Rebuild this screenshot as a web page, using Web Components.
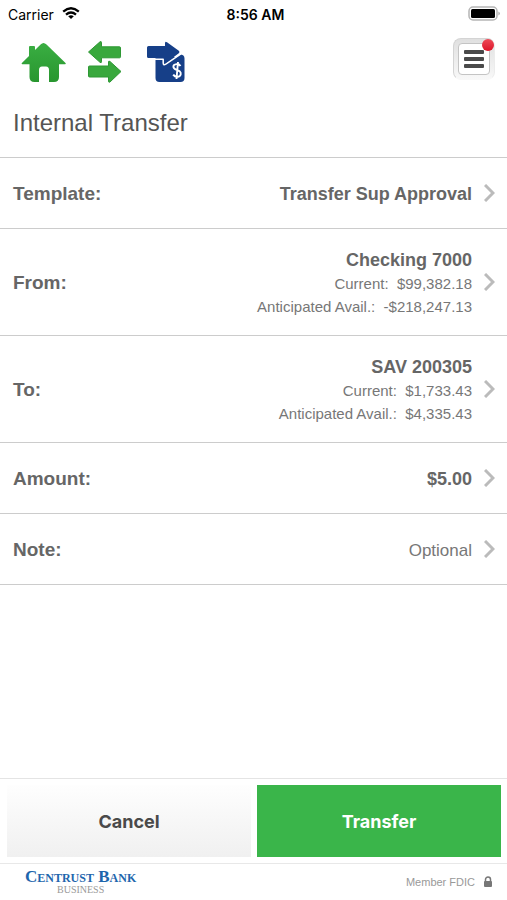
<!DOCTYPE html>
<html lang="en">
<head>
<meta charset="utf-8">
<meta name="viewport" content="width=device-width, initial-scale=1">
<title>Internal Transfer</title>
<style>
  html, body {
    height: 100%;
  }
  body {
    margin: 0;
    background: #fff;
    color: #666;
    font-family: "Liberation Sans", Helvetica, Arial, sans-serif;
  }
</style>
</head>
<body>
<transfer-page></transfer-page>

<script>
const define = (name, html) => {
  const template = document.createElement("template");
  template.innerHTML = html;

  window.customElements.define(
    name,
    class extends HTMLElement {
      constructor() {
        super();
        this.attachShadow({ mode: "open" });
        this.shadowRoot.appendChild(template.content.cloneNode(true));
      }
    }
  );
};

define("status-bar", `
    <style>
    :host {
      display: grid;
      grid-template-columns: 1fr auto 1fr;
      align-items: center;
      height: 28px;
      padding: 0 6px 0 8px;
      color: #000;
      font-family: Inter, sans-serif;
      font-size: 14px;
    }
    .carrier {
      display: flex;
      align-items: center;
      gap: 8px;
    }
    time {
      padding-left: 2px;
      font-weight: 600;
    }
    .battery {
      justify-self: end;
    }
    svg {
      display: block;
    }
    </style>

    <div class="carrier">
      <span>Carrier</span>
      <svg width="18" height="14" viewBox="0 0 18 14" fill="none" stroke="#000" stroke-width="2.3">
        <path d="M1.2 4.6Q9-2.2 16.8 4.6"/>
        <path d="M4 7.7Q9 3.4 14 7.7"/>
        <path d="M9 12L6.2 9.3Q9 7.2 11.8 9.3Z" fill="#000" stroke="none"/>
      </svg>
    </div>
    <time>8:56 AM</time>
    <svg class="battery" width="33" height="16" viewBox="0 0 33 16">
      <rect x="1" y="1" width="28" height="13" rx="4" fill="#fff" stroke="#b5b5b5" stroke-width="1.5"/>
      <rect x="3" y="3" width="24" height="9" rx="1.5" fill="#000"/>
      <path d="M30.5 5.5Q33 7.5 30.5 9.5Z" fill="#999"/>
    </svg>
`);

define("nav-bar", `
    <style>
    :host {
      display: flex;
      align-items: center;
      justify-content: space-between;
      height: 68px;
      padding: 0 12px 0 20px;
    }
    nav {
      display: flex;
      gap: 14px;
    }
    a, svg {
      display: block;
    }
    .menu {
      position: relative;
      box-sizing: border-box;
      width: 42px;
      height: 42px;
      margin-bottom: 6px;
      padding: 4px;
      border: 1px solid #d4d4d4;
      border-bottom-color: #f8f8f8;
      border-right-color: #ececec;
      border-radius: 8px;
      background: linear-gradient(#e0e0e0, #f8f8f8);
      cursor: pointer;
    }
    .face {
      box-sizing: border-box;
      display: flex;
      flex-direction: column;
      align-items: center;
      justify-content: center;
      gap: 3px;
      height: 32px;
      border: 1px solid #c4c4c4;
      border-radius: 4px;
      background: #fff;
    }
    .face i {
      width: 20px;
      height: 4px;
      border-radius: 1px;
      background: #4a4a4a;
    }
    .badge {
      position: absolute;
      top: 0;
      right: 0;
      width: 12px;
      height: 12px;
      border-radius: 50%;
      background: linear-gradient(#ee4a58, #dc1428);
    }
    </style>

    <nav>
      <a href="#home" aria-label="Home">
        <svg width="48" height="44" viewBox="0 0 48 44">
          <defs>
            <linearGradient id="g" x2="0" y2="1">
              <stop stop-color="#3aae42"/>
              <stop offset="1" stop-color="#28962f"/>
            </linearGradient>
          </defs>
          <path fill="url(#g)" d="M9 7q0-1 1-1h4q1 0 1 1V10l5.600-5.500Q23.500 1.500 26.500 4.500L45.500 23q1 1.200-.6 1.200H39V37q0 5-5 5h-5V30q0-3.500-3-3.500h-4q-3 0-3 3.500V42h-4.500q-5 0-5-5V24.200H2.500q-1.600 0-.6-1.200L9 15.900Z"/>
        </svg>
      </a>
      <a href="#transfers" aria-label="Transfers">
        <svg width="46" height="44" viewBox="0 0 46 44" stroke-linejoin="round">
          <path fill="#39a83d" stroke="#2e9834" d="M6.500 12L18 1.800q1.500-.8 1.500 1v4H37.500q1 0 1 1v9q0 1-1 1H19.500v4q0 1.500-1.500.5Z"/>
          <path fill="#39a83d" stroke="#2e9834" d="M39 31.500L28 42q-1.500.8-1.500-1v-4H7.500q-1 0-1-1v-9q0-1 1-1h19v-4q0-1.500 1.500-.5Z"/>
        </svg>
      </a>
      <a href="#payments" aria-label="Payments">
        <svg width="46" height="44" viewBox="0 0 46 44">
          <path fill="#163f88" d="M13.500 17H34l4-2.500q4.500 0 4.500 4V38q0 4-4 4h-21q-4 0-4-4Z"/>
          <path fill="none" stroke="#fff" stroke-width="1.500" stroke-linejoin="round" d="M13 19.200h8.200V23q0 2.800 2.600 1.200L39 13.800"/>
          <path fill="#163f88" d="M5 7.500q0-1.500 1.500-1.500H23V3.200q0-2.500 2-1L36.800 10.800q1.500 1.200 0 2.400L25 22q-2 1.500-2-.8V18H6.500Q5 18 5 16.500Z"/>
          <path fill="none" stroke="#fff" stroke-width="1.900" d="M38.500 26q-1.500-2.200-4-1.900c-4.300.5-3.800 4.300-.5 5.600 3.500 1.300 5.200 2.100 4.700 4.700-.6 3-5.400 3.300-7.500.2M36 22l-1.500 17"/>
        </svg>
      </a>
    </nav>
    <button class="menu" type="button" aria-label="Menu">
      <span class="face"><i></i><i></i><i></i></span>
      <span class="badge"></span>
    </button>
`);

define("form-row", `
    <style>
    :host {
      display: block;
      border-bottom: 1px solid #ccc;
    }
    button {
      box-sizing: border-box;
      display: flex;
      align-items: center;
      width: 100%;
      min-height: 70px;
      padding: 19px 12px 17px 13px;
      border: 0;
      background: none;
      color: #666;
      font: inherit;
      text-align: right;
      cursor: pointer;
    }
    .label {
      font-size: 19px;
      font-weight: bold;
    }
    .value {
      flex: 1;
      font-size: 18px;
      line-height: 24px;
    }
    ::slotted(small) {
      display: block;
      font-size: 15px;
      line-height: 23px;
      color: #777;
    }
    ::slotted(span) {
      font-size: 17px;
      color: #777;
    }
    svg {
      margin: 0 0 3px 12px;
    }
    </style>

    <button type="button">
      <span class="label"><slot name="label"></slot></span>
      <span class="value"><slot></slot></span>
      <svg width="11" height="18" viewBox="0 0 11 18" fill="none" stroke="#bbb" stroke-width="3">
        <path d="M1 1L9 9L1 17"/>
      </svg>
    </button>
`);

define("action-bar", `
    <style>
    :host {
      display: grid;
      grid-template-columns: 1fr 1fr;
      gap: 6px;
      padding: 6px 6px 6px 7px;
      border-top: 1px solid #e4e4e4;
      border-bottom: 1px solid #e8e8e8;
    }
    button {
      height: 72px;
      padding: 0;
      border: 0;
      font: 700 18px Inter, sans-serif;
      cursor: pointer;
    }
    .cancel {
      background: linear-gradient(#fefefe, #f0f0f0);
      color: #4a4a4a;
    }
    .submit {
      background: #3ab54a;
      color: #fff;
    }
    </style>

    <button class="cancel" type="button">Cancel</button>
    <button class="submit" type="submit">Transfer</button>
`);

define("bank-footer", `
    <style>
    :host {
      display: flex;
      align-items: center;
      justify-content: space-between;
      height: 36px;
      padding: 0 14px 0 25px;
    }
    .logo {
      display: flex;
      flex-direction: column;
      align-items: center;
      font-family: "Liberation Serif", serif;
      color: #999;
      font-size: 10px;
      line-height: 10px;
    }
    .logo b {
      color: #1e66ad;
      font-size: 17px;
      line-height: 16px;
      font-variant: small-caps;
    }
    .member {
      display: flex;
      align-items: center;
      gap: 8px;
      color: #999;
      font-size: 11px;
    }
    </style>

    <div class="logo"><b>Centrust Bank</b><span>BUSINESS</span></div>
    <div class="member">
      <span>Member FDIC</span>
      <svg width="10" height="12" viewBox="0 0 10 12">
        <path d="M2.500 6V3.500a2.500 2.500 0 0 1 5 0V6" fill="none" stroke="#777" stroke-width="1.500"/>
        <rect x="1" y="5" width="8" height="6" rx="1" fill="#777"/>
      </svg>
    </div>
`);

define("transfer-page", `
    <style>
    :host {
      display: flex;
      flex-direction: column;
      min-height: 100%;
    }
    main {
      flex: 1;
    }
    h1 {
      margin: 0;
      padding: 12px 13px 20px;
      border-bottom: 1px solid #ccc;
      color: #555;
      font-size: 24px;
      font-weight: normal;
      line-height: 29px;
    }
    </style>

    <status-bar></status-bar>
    <nav-bar></nav-bar>
    <main>
      <h1>Internal Transfer</h1>
      <form-row><b slot="label">Template:</b><b>Transfer Sup Approval</b></form-row>
      <form-row>
        <b slot="label">From:</b>
        <b>Checking 7000</b>
        <small>Current:&nbsp; $99,382.18</small>
        <small>Anticipated Avail.:&nbsp; -$218,247.13</small>
      </form-row>
      <form-row>
        <b slot="label">To:</b>
        <b>SAV 200305</b>
        <small>Current:&nbsp; $1,733.43</small>
        <small>Anticipated Avail.:&nbsp; $4,335.43</small>
      </form-row>
      <form-row><b slot="label">Amount:</b><b>$5.00</b></form-row>
      <form-row><b slot="label">Note:</b><span>Optional</span></form-row>
    </main>
    <action-bar></action-bar>
    <bank-footer></bank-footer>
`);
</script>
</body>
</html>
